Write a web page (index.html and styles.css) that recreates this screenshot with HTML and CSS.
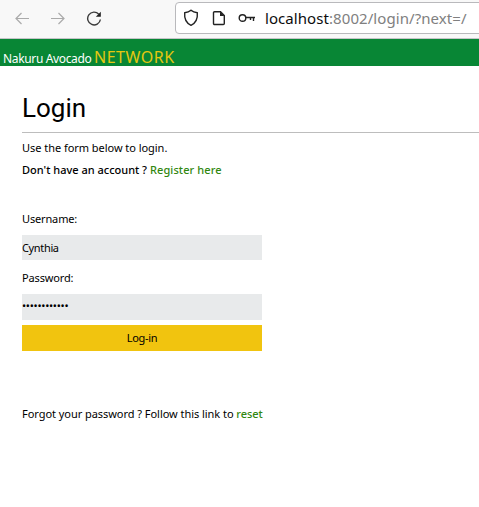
FILE: index.html
```html
<!DOCTYPE html>
<html lang="en">
<head>
<meta charset="utf-8">
<title>Login</title>
<link rel="stylesheet" href="styles.css">
</head>
<body>
<div class="toolbar">
  <div class="nav">
    <svg class="off" width="16" height="16" viewBox="0 0 16 16"><path d="M15 8.500H2M7.500 3L2 8.500l5.500 5.500"/></svg>
    <svg class="off" width="16" height="16" viewBox="0 0 16 16"><path d="M1 8.500h13M8.500 3l5.500 5.500-5.500 5.500"/></svg>
    <svg class="reload" width="16" height="16" viewBox="0 0 16 16"><path d="M12.800 4.200A6.400 6.400 0 1 0 14.400 9.500"/><path class="tip" d="M14.800 1.800v5H9.800z"/></svg>
  </div>
  <div class="urlbar">
    <svg class="shield" width="16" height="18" viewBox="0 0 16 18"><path d="M8 1.200C6.300 2.700 4.200 3.500 1.700 3.800C1.200 9.300 3 14 8 16.300C13 14 14.800 9.300 14.300 3.800C11.800 3.500 9.700 2.700 8 1.200z"/></svg>
    <svg class="page" width="14" height="16" viewBox="0 0 14 16"><path d="M2.500 1.700h6l3.800 3.800v8a1 1 0 0 1-1 1H2.500a1 1 0 0 1-1-1V2.700a1 1 0 0 1 1-1z"/><path class="fill" d="M8 1.500v4.500h4.500z"/></svg>
    <svg class="key" width="18" height="10" viewBox="0 0 18 10"><circle cx="4.500" cy="5" r="3.300"/><path d="M8 4.500h9M12.500 4.500v2.500M15.500 4.500v3.500"/></svg>
    <span class="url"><b>localhost</b>:8002/login/?next=/</span>
  </div>
</div>
<header class="brand"><span class="name">Nakuru Avocado</span><span class="network">NETWORK</span></header>
<main>
  <h1>Login</h1>
  <p class="intro">Use the form below to login.</p>
  <p class="account"><strong>Don't have an account ?</strong> <a>Register here</a></p>
  <form>
    <label class="user" for="u">Username:</label>
    <input id="u" type="text" value="Cynthia">
    <label class="pass">Password:</label>
    <div class="secret">••••••••••••</div>
    <button type="button">Log-in</button>
  </form>
  <p class="forgot">Forgot your password ? Follow this link to <a>reset</a></p>
</main>
</body>
</html>
```
FILE: styles.css
```css
* { box-sizing: border-box; }
body { margin: 0; background: #fff; color: #000; font: 11px/16px "Noto Sans", sans-serif; overflow: hidden; }
svg { display: block; fill: none; stroke: #222; stroke-width: 1.4; flex: none; }
.toolbar { height: 39px; background: #f8f8f8; border-bottom: 1px solid #c5c5c8; display: flex; }
.nav { width: 175px; padding: 10px 0 0 14px; display: flex; gap: 20px; flex: none; }
.off { stroke: #aaa; stroke-width: 1.2; }
.reload { stroke: #3b3b3b; }
.reload .tip, .page .fill { fill: #222; stroke: none; }
.urlbar { width: 320px; height: 32px; margin-top: 2px; flex: none; display: flex; align-items: center; padding-left: 7px; background: #fff; border: 1px solid #b9b9bc; border-radius: 4px; }
.page { margin-left: 13px; }
.key { margin-left: 12px; }
.url { margin-left: 9px; font-size: 15px; line-height: 20px; letter-spacing: .07px; color: #808080; white-space: nowrap; }
.url b { font-weight: 400; color: #0c0c0d; }
.brand { height: 27px; padding: 8px 0 0 3px; background: #088635; color: #fff; display: flex; align-items: baseline; line-height: 20px; white-space: nowrap; }
.name { width: 91px; font-size: 12px; letter-spacing: -.35px; }
.network { font-size: 16px; letter-spacing: .53px; color: #e5c710; }
main { padding: 24px 0 0 22px; white-space: nowrap; }
h1 { margin: 0; height: 43px; border-bottom: 1px solid #bdbdbd; font: 400 26px/36px Roboto, sans-serif; }
p { margin: 0; }
.intro { margin-top: 7px; letter-spacing: -.04px; }
.account { margin-top: 6px; }
strong, a { font-weight: 500; }
a { color: #31870f; }
.account a { letter-spacing: .1px; }
label { display: block; letter-spacing: -.15px; }
.user { margin-top: 33px; }
.pass { margin-top: 10px; }
input, .secret, button { display: block; width: 240px; border: 0; padding: 0; margin: 0; font: inherit; color: #000; background: #e8eaeb; }
input { height: 25px; margin-top: 8px; padding-bottom: 1px; letter-spacing: -.35px; }
.secret { height: 26px; margin-top: 8px; line-height: 24px; letter-spacing: -.28px; }
button { height: 26px; margin-top: 5px; background: #f1c40f; text-align: center; letter-spacing: -.35px; }
.forgot { margin-top: 55px; letter-spacing: -.045px; }
```
